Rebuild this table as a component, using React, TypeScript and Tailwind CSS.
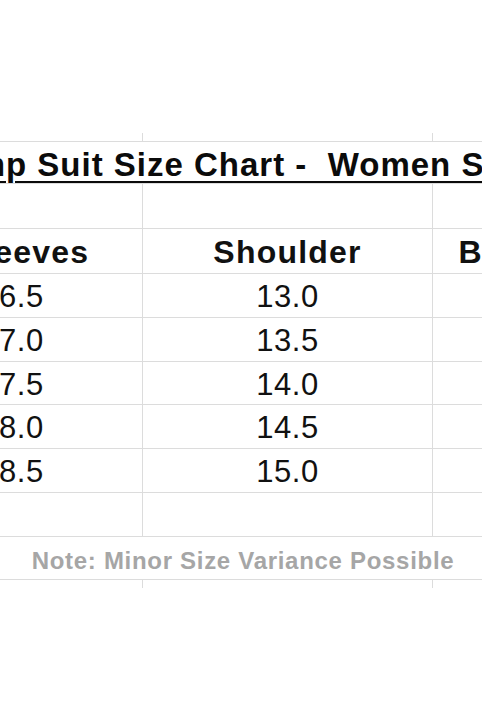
const sleeves = ["16.5", "17.0", "17.5", "18.0", "18.5"];
const shoulder = ["13.0", "13.5", "14.0", "14.5", "15.0"];
const heights = ["h-[44px]", "h-[44px]", "h-[43px]", "h-[44px]", "h-[44px]"];

function Cells({
  a,
  b,
  c,
  className,
  cell = "",
  first = "",
}: {
  a?: string;
  b?: string;
  c?: string;
  className: string;
  cell?: string;
  first?: string;
}) {
  return (
    <div className={`flex border-b border-[#dcdcdc] ${className}`}>
      <div className={`w-[252px] shrink-0 border-r border-[#dcdcdc] text-center ${cell} ${first}`}>{a}</div>
      <div className={`w-[290px] shrink-0 border-r border-[#dcdcdc] text-center ${cell}`}>{b}</div>
      <div className={`w-[128px] shrink-0 border-r border-[#dcdcdc] text-center ${cell}`}>{c}</div>
      <div className="flex-1" />
    </div>
  );
}

export default function App() {
  return (
    <div
      className="h-[720px] w-[482px] overflow-hidden bg-white pt-[133px] text-[#111]"
      style={{ fontFamily: '"Liberation Sans", Arial, sans-serif' }}
    >
      <div className="-ml-[109px] w-[704px]">
        {/* stub of the row above */}
        <Cells className="h-[9px]" />

        {/* title */}
        <div className="h-[42px] border-b border-[#dcdcdc] pt-[6px] text-center">
          <span className="whitespace-pre text-[33px] font-bold leading-[33px] tracking-[1px] text-[#0b0b0b] underline decoration-[2px] underline-offset-[5px]">
            Jump Suit Size Chart -  Women Sizes
          </span>
        </div>

        <Cells className="h-[45px]" />

        <Cells
          className="h-[45px] text-[32px] font-bold leading-[32px] tracking-[1.2px]"
          cell="pt-[7px]"
          first="pl-[18px]"
          a="Sleeves"
          b="Shoulder"
          c="Bust"
        />

        {sleeves.map((s, i) => (
          <Cells
            key={s}
            className={`${heights[i]} text-[31px] leading-[31px] tracking-[0.5px]`}
            cell="pt-[7px]"
            first="pr-[8px]"
            a={s}
            b={shoulder[i]}
          />
        ))}

        <Cells className="h-[44px]" />

        {/* note */}
        <div className="h-[43px] border-b border-[#dcdcdc] pt-[12px] text-center text-[24px] font-bold leading-[24px] tracking-[0.7px] text-[#a6a6a6]">
          Note: Minor Size Variance Possible
        </div>

        <div className="flex h-[8px]">
          <div className="w-[252px] shrink-0 border-r border-[#dcdcdc]" />
          <div className="w-[290px] shrink-0 border-r border-[#dcdcdc]" />
          <div className="w-[128px] shrink-0 border-r border-[#dcdcdc]" />
        </div>
      </div>
    </div>
  );
}
